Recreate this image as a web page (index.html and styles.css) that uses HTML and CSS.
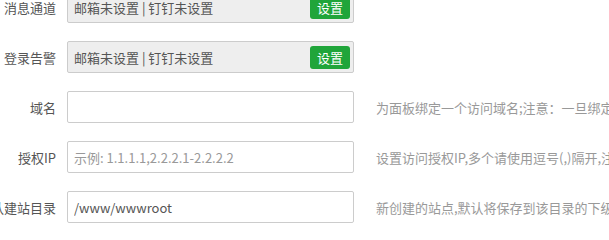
FILE: index.html
```html
<!DOCTYPE html>
<html lang="zh-CN">
<head>
<meta charset="utf-8">
<title>面板设置</title>
<link rel="stylesheet" href="styles.css">
</head>
<body>
<div class="form">
  <div class="row">
    <span class="label">消息通道</span>
    <div class="field disabled">
      <span class="value">邮箱未设置 | 钉钉未设置</span>
      <button class="btn">设置</button>
    </div>
  </div>
  <div class="row">
    <span class="label">登录告警</span>
    <div class="field disabled">
      <span class="value">邮箱未设置 | 钉钉未设置</span>
      <button class="btn">设置</button>
    </div>
  </div>
  <div class="row">
    <span class="label">域名</span>
    <input class="field input" type="text" value="">
    <span class="help">为面板绑定一个访问域名;注意：一旦绑定域名,只能通过域名访问面板!</span>
  </div>
  <div class="row">
    <span class="label">授权IP</span>
    <input class="field input" type="text" placeholder="示例: 1.1.1.1,2.2.2.1-2.2.2.2">
    <span class="help">设置访问授权IP,多个请使用逗号(,)隔开,注意：一旦设置授权IP,只有指定IP的电脑能访问面板!</span>
  </div>
  <div class="row">
    <span class="label">默认建站目录</span>
    <input class="field input" type="text" value="/www/wwwroot">
    <span class="help">新创建的站点,默认将保存到该目录的下级目录</span>
  </div>
</div>
</body>
</html>
```
FILE: styles.css
```css
html, body {
  margin: 0;
  padding: 0;
  background: #fff;
  overflow: hidden;
}
body {
  font-family: "Noto Sans CJK SC", "Liberation Sans", sans-serif;
  font-size: 13px;
  color: #555;
}
.form {
  margin-top: -9px;
  margin-left: -43px;
  display: flex;
  flex-direction: column;
  gap: 18px;
  width: 1000px;
}
.row {
  display: flex;
  align-items: center;
  height: 32px;
}
.label {
  width: 110px;
  box-sizing: border-box;
  padding-right: 11px;
  text-align: right;
  white-space: nowrap;
  flex: none;
  color: #555;
  display: flex;
  justify-content: flex-end;
}
.field {
  box-sizing: border-box;
  width: 287px;
  height: 32px;
  border: 1px solid #ccc;
  border-radius: 2px;
  flex: none;
  font: inherit;
  color: #555;
}
.disabled {
  background: #eee;
  display: flex;
  align-items: center;
  justify-content: space-between;
  padding: 0 3px 0 6px;
}
.value {
  white-space: nowrap;
  color: #555;
}
.btn {
  width: 40px;
  height: 23px;
  margin-top: 1px;
  border: none;
  border-radius: 3px;
  background: #20a53a;
  color: #fff;
  font: inherit;
  font-size: 13px;
  padding: 0;
  line-height: 23px;
}
.input {
  padding: 0 6px;
  background: #fff;
  outline: none;
}
.input::placeholder {
  color: #999;
}
.help {
  margin-left: 22px;
  color: #999;
  white-space: nowrap;
}
```
